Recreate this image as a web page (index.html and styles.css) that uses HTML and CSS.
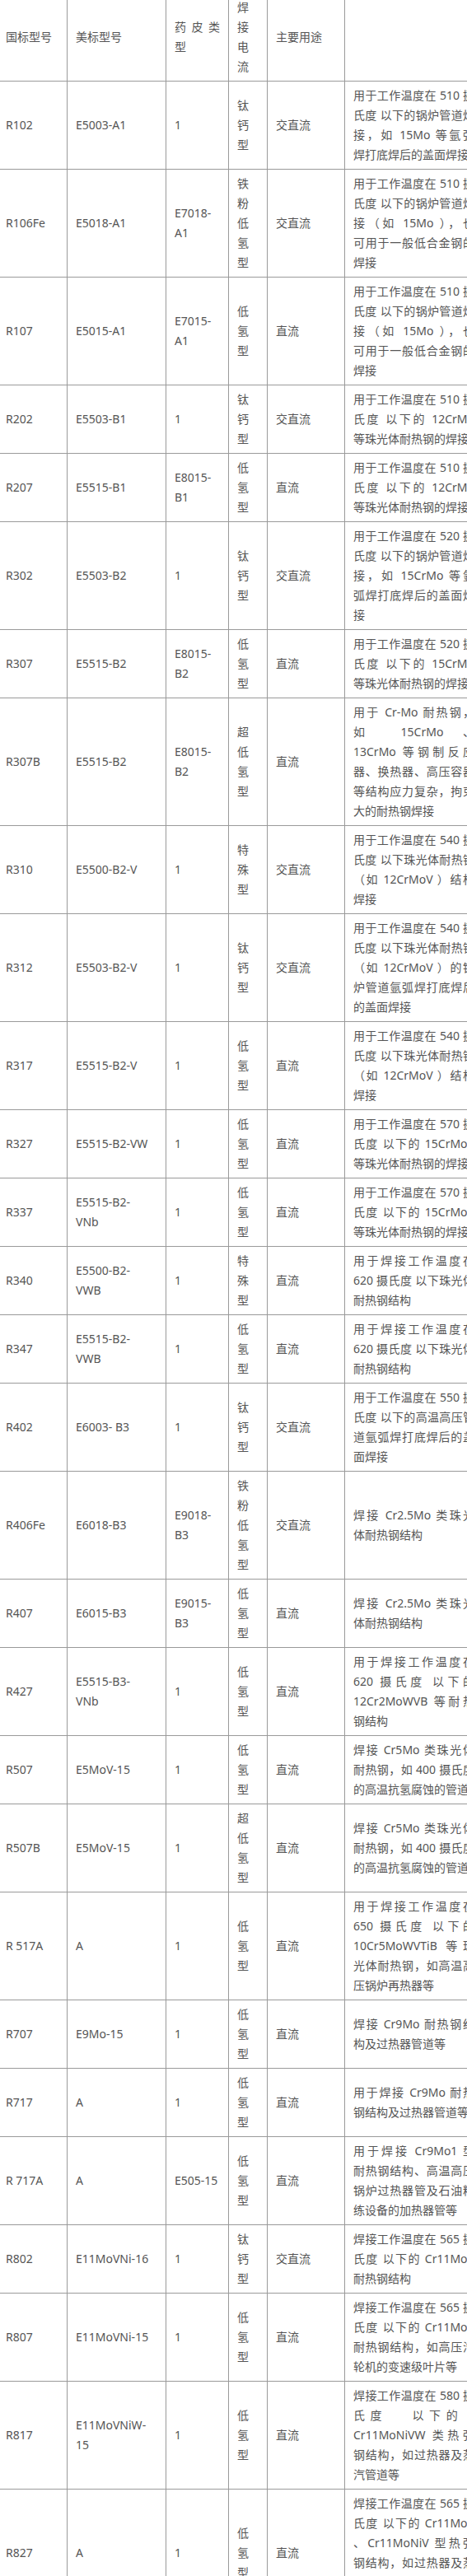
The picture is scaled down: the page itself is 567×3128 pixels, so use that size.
FILE: index.html
```html
<!DOCTYPE html>
<html lang="zh-CN">
<head>
<meta charset="utf-8">
<title>耐热钢焊条型号对照</title>
<link rel="stylesheet" href="styles.css">
</head>
<body>
<table class="spec">
  <colgroup>
    <col class="c-gb"><col class="c-aws"><col class="c-coat"><col class="c-cur"><col class="c-ac"><col class="c-use">
  </colgroup>
  <tbody>
    <tr><td>国标型号</td><td>美标型号</td><td><span class="ln">药皮类</span><span class="ln">型</span></td><td>焊接电流</td><td>主要用途</td><td></td></tr>
    <tr><td>R102</td><td>E5003-A1</td><td>1</td><td>钛钙型</td><td>交直流</td><td><span class="ln">用于工作温度在 510 摄</span><span class="ln">氏度 以下的锅炉管道焊</span><span class="ln">接，如 15Mo 等氩弧</span><span class="ln">焊打底焊后的盖面焊接</span></td></tr>
    <tr><td>R106Fe</td><td>E5018-A1</td><td>E7018-<br>A1</td><td>铁粉低氢型</td><td>交直流</td><td><span class="ln">用于工作温度在 510 摄</span><span class="ln">氏度 以下的锅炉管道焊</span><span class="ln">接（如 15Mo ），也</span><span class="ln">可用于一般低合金钢的</span><span class="ln">焊接</span></td></tr>
    <tr><td>R107</td><td>E5015-A1</td><td>E7015-<br>A1</td><td>低氢型</td><td>直流</td><td><span class="ln">用于工作温度在 510 摄</span><span class="ln">氏度 以下的锅炉管道焊</span><span class="ln">接（如 15Mo ），也</span><span class="ln">可用于一般低合金钢的</span><span class="ln">焊接</span></td></tr>
    <tr><td>R202</td><td>E5503-B1</td><td>1</td><td>钛钙型</td><td>交直流</td><td><span class="ln">用于工作温度在 510 摄</span><span class="ln">氏度 以下的 12CrMo</span><span class="ln">等珠光体耐热钢的焊接</span></td></tr>
    <tr><td>R207</td><td>E5515-B1</td><td>E8015-<br>B1</td><td>低氢型</td><td>直流</td><td><span class="ln">用于工作温度在 510 摄</span><span class="ln">氏度 以下的 12CrMo</span><span class="ln">等珠光体耐热钢的焊接</span></td></tr>
    <tr><td>R302</td><td>E5503-B2</td><td>1</td><td>钛钙型</td><td>交直流</td><td><span class="ln">用于工作温度在 520 摄</span><span class="ln">氏度 以下的锅炉管道焊</span><span class="ln">接，如 15CrMo 等氩</span><span class="ln">弧焊打底焊后的盖面焊</span><span class="ln">接</span></td></tr>
    <tr><td>R307</td><td>E5515-B2</td><td>E8015-<br>B2</td><td>低氢型</td><td>直流</td><td><span class="ln">用于工作温度在 520 摄</span><span class="ln">氏度 以下的 15CrMo</span><span class="ln">等珠光体耐热钢的焊接</span></td></tr>
    <tr><td>R307B</td><td>E5515-B2</td><td>E8015-<br>B2</td><td>超低氢型</td><td>直流</td><td><span class="ln">用于 Cr-Mo 耐热钢，</span><span class="ln">如 15CrMo 、</span><span class="ln">13CrMo 等钢制反应</span><span class="ln">器、换热器、高压容器</span><span class="ln">等结构应力复杂，拘束</span><span class="ln">大的耐热钢焊接</span></td></tr>
    <tr><td>R310</td><td>E5500-B2-V</td><td>1</td><td>特殊型</td><td>交直流</td><td><span class="ln">用于工作温度在 540 摄</span><span class="ln">氏度 以下珠光体耐热钢</span><span class="ln">（如 12CrMoV ）结构</span><span class="ln">焊接</span></td></tr>
    <tr><td>R312</td><td>E5503-B2-V</td><td>1</td><td>钛钙型</td><td>交直流</td><td><span class="ln">用于工作温度在 540 摄</span><span class="ln">氏度 以下珠光体耐热钢</span><span class="ln">（如 12CrMoV ）的锅</span><span class="ln">炉管道氩弧焊打底焊后</span><span class="ln">的盖面焊接</span></td></tr>
    <tr><td>R317</td><td>E5515-B2-V</td><td>1</td><td>低氢型</td><td>直流</td><td><span class="ln">用于工作温度在 540 摄</span><span class="ln">氏度 以下珠光体耐热钢</span><span class="ln">（如 12CrMoV ）结构</span><span class="ln">焊接</span></td></tr>
    <tr><td>R327</td><td>E5515-B2-VW</td><td>1</td><td>低氢型</td><td>直流</td><td><span class="ln">用于工作温度在 570 摄</span><span class="ln">氏度 以下的 15CrMoV</span><span class="ln">等珠光体耐热钢的焊接</span></td></tr>
    <tr><td>R337</td><td>E5515-B2-<br>VNb</td><td>1</td><td>低氢型</td><td>直流</td><td><span class="ln">用于工作温度在 570 摄</span><span class="ln">氏度 以下的 15CrMoV</span><span class="ln">等珠光体耐热钢的焊接</span></td></tr>
    <tr><td>R340</td><td>E5500-B2-<br>VWB</td><td>1</td><td>特殊型</td><td>直流</td><td><span class="ln">用于焊接工作温度在</span><span class="ln">620 摄氏度 以下珠光体</span><span class="ln">耐热钢结构</span></td></tr>
    <tr><td>R347</td><td>E5515-B2-<br>VWB</td><td>1</td><td>低氢型</td><td>直流</td><td><span class="ln">用于焊接工作温度在</span><span class="ln">620 摄氏度 以下珠光体</span><span class="ln">耐热钢结构</span></td></tr>
    <tr><td>R402</td><td>E6003- B3</td><td>1</td><td>钛钙型</td><td>交直流</td><td><span class="ln">用于工作温度在 550 摄</span><span class="ln">氏度 以下的高温高压管</span><span class="ln">道氩弧焊打底焊后的盖</span><span class="ln">面焊接</span></td></tr>
    <tr><td>R406Fe</td><td>E6018-B3</td><td>E9018-<br>B3</td><td>铁粉低氢型</td><td>交直流</td><td><span class="ln">焊接 Cr2.5Mo 类珠光</span><span class="ln">体耐热钢结构</span></td></tr>
    <tr><td>R407</td><td>E6015-B3</td><td>E9015-<br>B3</td><td>低氢型</td><td>直流</td><td><span class="ln">焊接 Cr2.5Mo 类珠光</span><span class="ln">体耐热钢结构</span></td></tr>
    <tr><td>R427</td><td>E5515-B3-<br>VNb</td><td>1</td><td>低氢型</td><td>直流</td><td><span class="ln">用于焊接工作温度在</span><span class="ln">620 摄氏度 以下的</span><span class="ln">12Cr2MoWVB 等耐热</span><span class="ln">钢结构</span></td></tr>
    <tr><td>R507</td><td>E5MoV-15</td><td>1</td><td>低氢型</td><td>直流</td><td><span class="ln">焊接 Cr5Mo 类珠光体</span><span class="ln">耐热钢，如 400 摄氏度</span><span class="ln">的高温抗氢腐蚀的管道</span></td></tr>
    <tr><td>R507B</td><td>E5MoV-15</td><td>1</td><td>超低氢型</td><td>直流</td><td><span class="ln">焊接 Cr5Mo 类珠光体</span><span class="ln">耐热钢，如 400 摄氏度</span><span class="ln">的高温抗氢腐蚀的管道</span></td></tr>
    <tr><td>R 517A</td><td>A</td><td>1</td><td>低氢型</td><td>直流</td><td><span class="ln">用于焊接工作温度在</span><span class="ln">650 摄氏度 以下的</span><span class="ln">10Cr5MoWVTiB 等珠</span><span class="ln">光体耐热钢，如高温高</span><span class="ln">压锅炉再热器等</span></td></tr>
    <tr><td>R707</td><td>E9Mo-15</td><td>1</td><td>低氢型</td><td>直流</td><td><span class="ln">焊接 Cr9Mo 耐热钢结</span><span class="ln">构及过热器管道等</span></td></tr>
    <tr><td>R717</td><td>A</td><td>1</td><td>低氢型</td><td>直流</td><td><span class="ln">用于焊接 Cr9Mo 耐热</span><span class="ln">钢结构及过热器管道等</span></td></tr>
    <tr><td>R 717A</td><td>A</td><td>E505-15</td><td>低氢型</td><td>直流</td><td><span class="ln">用于焊接 Cr9Mo1 型</span><span class="ln">耐热钢结构、高温高压</span><span class="ln">锅炉过热器管及石油精</span><span class="ln">练设备的加热器管等</span></td></tr>
    <tr><td>R802</td><td>E11MoVNi-16</td><td>1</td><td>钛钙型</td><td>交直流</td><td><span class="ln">焊接工作温度在 565 摄</span><span class="ln">氏度 以下的 Cr11MoV</span><span class="ln">耐热钢结构</span></td></tr>
    <tr><td>R807</td><td>E11MoVNi-15</td><td>1</td><td>低氢型</td><td>直流</td><td><span class="ln">焊接工作温度在 565 摄</span><span class="ln">氏度 以下的 Cr11MoV</span><span class="ln">耐热钢结构，如高压汽</span><span class="ln">轮机的变速级叶片等</span></td></tr>
    <tr><td>R817</td><td>E11MoVNiW-<br>15</td><td>1</td><td>低氢型</td><td>直流</td><td><span class="ln">焊接工作温度在 580 摄</span><span class="ln">氏度&nbsp;&nbsp;&nbsp;以下的&nbsp;&nbsp;</span><span class="ln">Cr11MoNiVW 类热强</span><span class="ln">钢结构，如过热器及蒸</span><span class="ln">汽管道等</span></td></tr>
    <tr><td>R827</td><td>A</td><td>1</td><td>低氢型</td><td>直流</td><td><span class="ln">焊接工作温度在 565 摄</span><span class="ln">氏度 以下的 Cr11MoV</span><span class="ln">、Cr11MoNiV 型热强</span><span class="ln">钢结构，如过热器及蒸</span><span class="ln">汽管道、汽轮机叶片</span><span class="ln">等</span></td></tr>
  </tbody>
</table>
</body>
</html>
```

FILE: styles.css
```css
html {
  overflow: hidden;
}

body {
  margin: 0;
  background: #ffffff;
  color: #555555;
  font-family: "Noto Sans", "Noto Sans CJK SC", sans-serif;
  font-size: 14px;
  line-height: 24px;
}

.spec {
  border-collapse: collapse;
  table-layout: fixed;
  width: 590px;
  margin: -9px 0 0 -4px;
}

.c-gb { width: 85px; }
.c-aws { width: 120px; }
.c-coat { width: 76px; }
.c-cur { width: 47px; }
.c-ac { width: 94px; }
.c-use { width: 168px; }

.spec td {
  border: 1px solid #9a9a9a;
  padding: 5px 10px;
  vertical-align: middle;
  text-align: justify;
}

.ln {
  display: block;
  white-space: nowrap;
  text-align-last: justify;
}

.ln:last-child {
  text-align-last: auto;
}
```
